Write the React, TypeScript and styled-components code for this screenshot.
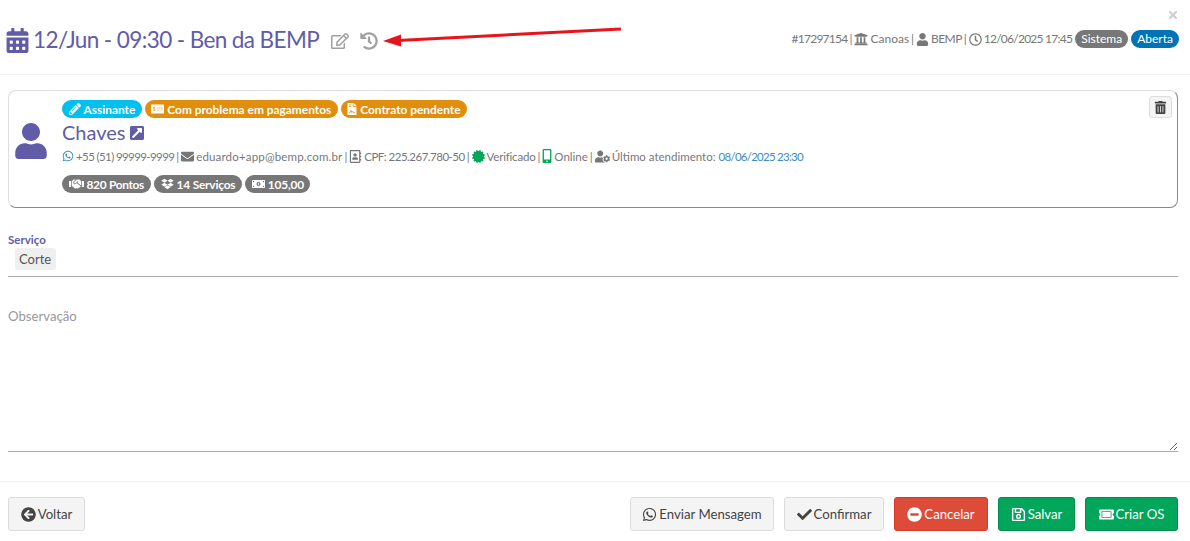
import React from 'react';
import styled, { createGlobalStyle } from 'styled-components';
import {
  FaArrowCircleLeft, FaCalendarAlt, FaCertificate, FaCheck, FaDropbox,
  FaEnvelope, FaExternalLinkSquareAlt, FaFileContract, FaHandshake, FaHistory, FaMinusCircle,
  FaMobileAlt, FaMoneyBillAlt, FaMoneyCheckAlt, FaPencilAlt, FaRegAddressBook, FaRegClock, FaRegEdit, FaRegSave,
  FaTicketAlt, FaTimes, FaTrashAlt, FaUniversity, FaUser, FaUserCog, FaWhatsapp,
} from 'react-icons/fa';

const Global = createGlobalStyle`
  html, body { margin: 0; padding: 0; background: #fff; }
  body { font-family: "Lato", "Noto Sans", sans-serif; color: #666; }
`;

const Page = styled.div`
  position: relative;
  width: 1190px;
  height: 541px;
  overflow: hidden;
`;
const Header = styled.header`
  height: 75px;
  box-sizing: border-box;
  padding: 25px 11px 0 4.5px;
  border-bottom: 1px solid #f2f2f2;
  display: flex;
  justify-content: space-between;
  align-items: flex-start;
`;
const Title = styled.h1`
  margin: 0;
  display: flex;
  align-items: center;
  font-size: 22.5px;
  line-height: 30px;
  font-weight: 400;
  color: #605ca8;
  letter-spacing: -0.6px;
  white-space: nowrap;
  > svg { font-size: 25px; margin-right: 3.5px; }
`;
const TitleAction = styled.span`
  display: inline-flex;
  color: #a0a0a0;
  font-size: 18px;
  margin-left: ${p => p.$gap}px;
  margin-top: 2px;
`;
const Meta = styled.div`
  display: flex;
  align-items: center;
  gap: 2px;
  margin-top: 5px;
  font-size: 12px;
  line-height: 18px;
  white-space: nowrap;
  color: #777;
`;
const Tight = styled.span`
  letter-spacing: ${p => p.$ls || -0.5}px;
`;
const Pill = styled.span`
  background: ${p => p.$bg};
  color: #fff;
  border-radius: 9px;
  height: 18px;
  padding: 0 6px;
  margin-left: 1px;
  display: inline-flex;
  align-items: center;
  font-size: 12px;
`;
const Close = styled.div`
  position: absolute;
  top: 9px;
  right: 11px;
  color: #d0d0d0;
  font-size: 12px;
  display: flex;
`;
const Arrow = styled.svg`
  position: absolute;
  left: 380px;
  top: 22px;
`;
const Body = styled.main`
  padding: 15px 12px 0 8px;
`;
const Card = styled.section`
  position: relative;
  height: 118px;
  box-sizing: border-box;
  display: flex;
  border: 1px solid #ddd;
  border-right-color: #888;
  border-bottom-color: #888;
  border-radius: 8px;
  padding: 9px 0 0 4px;
`;
const Avatar = styled.div`
  width: 36px;
  margin-right: 13px;
  padding-top: 23px;
  color: #605ca8;
  font-size: 36px;
  line-height: 0;
  display: flex;
  justify-content: center;
  flex-shrink: 0;
`;
const Info = styled.div`
  display: flex;
  flex-direction: column;
`;
const BadgeRow = styled.div`
  display: flex;
  gap: 3px;
`;
const Badge = styled.span`
  display: inline-flex;
  align-items: center;
  gap: 3px;
  height: 18px;
  padding: 0 6.5px;
  border-radius: 9px;
  background: ${p => p.$bg};
  color: #fff;
  font-size: 11.9px;
  font-weight: 700;
  white-space: nowrap;
  svg { width: ${p => p.$icon || 12}px; height: 12px; }
`;
const Name = styled.div`
  display: flex;
  align-items: center;
  gap: 3px;
  margin-top: 1px;
  height: 26px;
  font-size: 20px;
  color: #605ca8;
  svg { font-size: 16px; margin-top: 2px; }
`;
const Details = styled.div`
  display: flex;
  align-items: center;
  gap: 2px;
  margin-top: 2px;
  height: 18px;
  font-size: 11.5px;
  color: #777;
  white-space: nowrap;
`;
const Ico = styled.span`
  display: inline-flex;
  color: ${p => p.$color || 'inherit'};
  svg {
    width: ${p => p.$w || p.$size || 13}px;
    height: ${p => p.$size || 13}px;
  }
`;
const DateLink = styled(Tight)`
  color: #3c8dbc;
  margin-left: 1px;
`;
const StatRow = styled(BadgeRow)`
  margin-top: 10px;
  gap: 3.5px;
`;
const TrashButton = styled.button`
  position: absolute;
  top: 5px;
  right: 5px;
  width: 23px;
  height: 22px;
  padding: 0;
  border: 1px solid #ddd;
  border-radius: 3px;
  background: #f4f4f4;
  color: #444;
  font-size: 13px;
  display: flex;
  align-items: center;
  justify-content: center;
`;
const Field = styled.div`
  margin-top: 25px;
  height: 44px;
  box-sizing: border-box;
  border-bottom: 1px solid #aaa;
`;
const FieldLabel = styled.label`
  display: block;
  font-size: 11.5px;
  line-height: 13px;
  margin-bottom: 2px;
  font-weight: 700;
  color: #605ca8;
`;
const Chip = styled.span`
  display: inline-block;
  margin-left: 7px;
  padding: 0 5px 0 4px;
  height: 22px;
  line-height: 22px;
  background: #efefef;
  border-radius: 3px;
  font-size: 13px;
  color: #555;
`;
const Notes = styled.textarea`
  display: block;
  width: 100%;
  box-sizing: border-box;
  height: 175px;
  padding: 31px 0 0;
  border: 0;
  border-bottom: 1px solid #aaa;
  outline: none;
  font: 13.2px "Lato", "Noto Sans", sans-serif;
  color: #555;
  resize: vertical;
  &::placeholder { color: #999; opacity: 1; }
`;
const Footer = styled.footer`
  position: absolute;
  left: 0;
  right: 0;
  top: 481px;
  box-sizing: border-box;
  height: 60px;
  padding: 15px 12px 0 8px;
  border-top: 1px solid #f2f2f2;
  display: flex;
  justify-content: space-between;
  align-items: flex-start;
`;
const ButtonGroup = styled.div`
  display: flex;
  gap: ${p => p.$gap || 10}px;
`;
const Button = styled.button`
  height: 34px;
  box-sizing: border-box;
  width: ${p => p.$w}px;
  padding: 0;
  display: inline-flex;
  align-items: center;
  justify-content: center;
  gap: 2px;
  border-radius: 3px;
  border: 1px solid ${p => p.$border || '#ddd'};
  background: ${p => p.$bg || '#f4f4f4'};
  color: ${p => p.$fg || '#444'};
  font: 13.2px "Lato", "Noto Sans", sans-serif;
  white-space: nowrap;
  svg { font-size: 15px; }
`;

const Sep = () => <span>|</span>;

export default function App() {
  return (
    <Page>
      <Global />
      <Header>
        <Title>
          <FaCalendarAlt />
          12/Jun - 09:30 - Ben da BEMP
          <TitleAction $gap={12}><FaRegEdit /></TitleAction>
          <TitleAction $gap={11}><FaHistory /></TitleAction>
        </Title>
        <Meta>
          <Tight $ls={-0.75}>#17297154</Tight> <Sep /> <Ico $size={14}><FaUniversity /></Ico> Canoas <Sep /> <Ico><FaUser /></Ico> <Tight $ls={-0.6}>BEMP</Tight> <Sep />
          <Ico><FaRegClock /></Ico> <Tight $ls={-0.75}>12/06/2025 17:45</Tight>
          <Pill $bg="#777">Sistema</Pill>
          <Pill $bg="#0073b7">Aberta</Pill>
        </Meta>
      </Header>
      <Close><FaTimes /></Close>
      <Arrow width="245" height="30" viewBox="0 0 245 30">
        <path d="M241 7 L18 18.500" stroke="#e8141c" strokeWidth="3" fill="none" />
        <path d="M3 19 L21 12.500 L21 24.500 Z" fill="#e8141c" />
      </Arrow>
      <Body>
        <Card>
          <Avatar><FaUser /></Avatar>
          <Info>
            <BadgeRow>
              <Badge $bg="#00c0ef"><FaPencilAlt />Assinante</Badge>
              <Badge $bg="#e08e0b" $icon={13}><FaMoneyCheckAlt />Com problema em pagamentos</Badge>
              <Badge $bg="#e08e0b" $icon={10}><FaFileContract />Contrato pendente</Badge>
            </BadgeRow>
            <Name>Chaves <FaExternalLinkSquareAlt /></Name>
            <Details>
              <Ico $color="#3c8dbc" $size={12}><FaWhatsapp /></Ico> <Tight $ls={-0.6}>+55 (51) 99999-9999</Tight> <Sep />
              <Ico><FaEnvelope /></Ico> <Tight $ls={0.17}>eduardo+app@bemp.com.br</Tight> <Sep />
              <Ico><FaRegAddressBook /></Ico> <Tight>CPF: 225.267.780-50</Tight> <Sep />
              <Ico $color="#00a65a"><FaCertificate /></Ico> <Tight $ls={-0.2}>Verificado</Tight> <Sep />
              <Ico $color="#00a65a" $size={14} $w={10}><FaMobileAlt /></Ico> Online <Sep />
              <Ico $size={15}><FaUserCog /></Ico> Último atendimento: <DateLink $ls={-0.75}>08/06/2025 23:30</DateLink>
            </Details>
            <StatRow>
              <Badge $bg="#777" $icon={15}><FaHandshake /><Tight $ls={-0.3}>820 Pontos</Tight></Badge>
              <Badge $bg="#777" $icon={13}><FaDropbox /><Tight $ls={-0.2}>14 Serviços</Tight></Badge>
              <Badge $bg="#777" $icon={13}><FaMoneyBillAlt /><Tight $ls={-0.2}>105,00</Tight></Badge>
            </StatRow>
          </Info>
          <TrashButton><FaTrashAlt /></TrashButton>
        </Card>
        <Field>
          <FieldLabel>Serviço</FieldLabel>
          <Chip>Corte</Chip>
        </Field>
        <Notes placeholder="Observação" />
      </Body>
      <Footer>
        <Button $w={77}><FaArrowCircleLeft />Voltar</Button>
        <ButtonGroup>
          <Button $w={144}><FaWhatsapp />Enviar Mensagem</Button>
          <Button $w={100}><FaCheck />Confirmar</Button>
          <Button $w={94} $bg="#dd4b39" $border="#d73925" $fg="#fff"><FaMinusCircle />Cancelar</Button>
          <Button $w={77} $bg="#00a65a" $border="#008d4c" $fg="#fff"><FaRegSave />Salvar</Button>
          <Button $w={93} $bg="#00a65a" $border="#008d4c" $fg="#fff"><FaTicketAlt />Criar OS</Button>
        </ButtonGroup>
      </Footer>
    </Page>
  );
}
